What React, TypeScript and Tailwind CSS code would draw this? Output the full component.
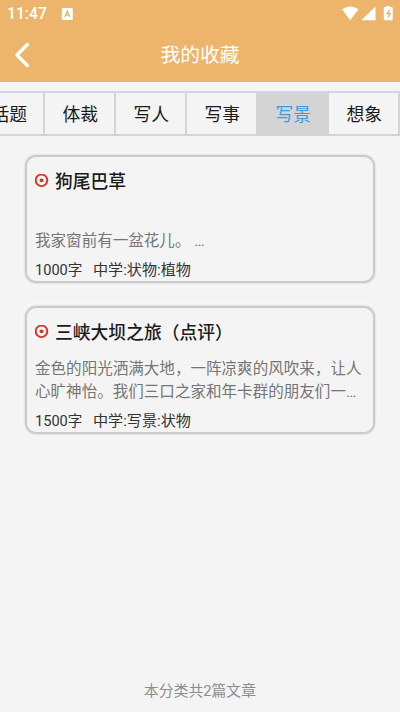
const FONT = 'font-["Roboto","Noto_Sans_CJK_SC",sans-serif]';

const tabs = ['话题', '体裁', '写人', '写事', '写景', '想象'];

const articles = [
  {
    title: '狗尾巴草',
    lines: ['', '我家窗前有一盆花儿。 …'],
    count: '1000字',
    category: '中学:状物:植物',
  },
  {
    title: '三峡大坝之旅（点评）',
    lines: ['金色的阳光洒满大地，一阵凉爽的风吹来，让人', '心旷神怡。我们三口之家和年卡群的朋友们一…'],
    count: '1500字',
    category: '中学:写景:状物',
  },
];

function StatusBar() {
  return (
    <div className="flex h-7 items-center pr-[7px] pl-[7px] text-white">
      <span className="w-[40px] text-[15.7px] leading-7 font-medium">11:47</span>
      <svg className="ml-[14px]" width="12" height="12" viewBox="0 0 12 12">
        <rect x="0.8" width="11" height="12" rx="1.5" fill="white" />
        <path d="M3.800 9 6.300 3 8.800 9M4.800 7.2h3" fill="none" stroke="#e9b56c" strokeWidth="1.3" />
      </svg>
      <svg className="ml-auto" width="52" height="16" viewBox="0 0 52 16">
        <path d="M1 3.3Q9-2.500 17.500 3.3L9.200 14.200Z" fill="white" />
        <path d="M34.500 .6V14.2H20.300Z" fill="white" />
        <path d="M45.500 0h3.500v1h1.700q1 0 1 1V13.200q0 1-1 1h-6.900q-1 0-1-1V2q0-1 1-1h1.700Z" fill="white" />
        <path d="M48.700 3.800 46.100 7.600h3L47.100 11.600" fill="none" stroke="#e0ad68" strokeWidth="1.200" />
      </svg>
    </div>
  );
}

function Card({ title, lines, count, category }: (typeof articles)[number]) {
  return (
    <article className="h-[128px] rounded-[11px] border-2 border-[#cbcbcb] bg-[#f4f4f4] px-[8px] pt-[12px] shadow-[0_0_2px_1px_#e2e2e2,0_0_2px_4px_#f7f7f7]">
      <div className="flex h-6 items-center">
        <svg width="14" height="14" viewBox="0 0 14 14">
          <circle cx="6.5" cy="6.3" r="5.800" fill="none" stroke="#d73427" strokeWidth="1.9" />
          <circle cx="6.5" cy="6.3" r="1.900" fill="#d73427" />
        </svg>
        <h2 className="ml-[6px] pt-[2px] text-[17.8px] leading-6 font-medium whitespace-nowrap text-[#1b1b1b]">{title}</h2>
      </div>
      <div className="mt-[14px] text-[15.560px] leading-[23px] text-[#757575]">
        {lines.map((line, i) => (
          <p key={i} className="h-[23px] whitespace-pre">{line}</p>
        ))}
      </div>
      <p className="mt-[7px] flex text-[#333] leading-5 whitespace-nowrap">
        <span className="w-[58px] text-[14.6px]">{count}</span>
        <span className="text-[15.1px]">{category}</span>
      </p>
    </article>
  );
}

export default function App() {
  return (
    <div className={`flex h-[712px] w-[400px] flex-col overflow-hidden bg-[#f4f4f4] ${FONT}`} lang="zh-CN">
      <header className="h-[82px] shrink-0 bg-[#edb56b]">
        <StatusBar />
        <div className="grid h-[54px] grid-cols-[40px_1fr_40px] items-center text-white">
          <svg className="ml-[14px]" width="16" height="26" viewBox="0 0 16 26">
            <path d="M13.300 2.500 3 13 13.300 23.500" fill="none" stroke="white" strokeWidth="3.400" strokeLinecap="round" strokeLinejoin="round" />
          </svg>
          <h1 className="pt-[2px] text-center text-[19.800px] leading-7">我的收藏</h1>
        </div>
      </header>
      <nav className="mt-[9px] flex h-[45px] w-[427px] shrink-0 -translate-x-[26px] border-t-2 border-b-2 border-t-[#d0d7e2] border-b-[#d4d4d4]">
        {tabs.map((tab) => (
          <div
            key={tab}
            className={`flex w-[71px] shrink-0 items-center justify-center border-r-2 border-[#d4d4d4] pt-[3px] pl-[1.5px] text-[17.8px] ${
              tab === '写景' ? 'bg-[#d4d4d4] text-[#3f9be0]' : 'text-[#1b1b1b]'
            }`}
          >
            {tab}
          </div>
        ))}
      </nav>
      <main className="mt-[19px] flex flex-col gap-[23px] px-[25px]">
        {articles.map((a) => (
          <Card key={a.title} {...a} />
        ))}
      </main>
      <footer className="mt-auto pb-[11px] text-center text-[14.8px] leading-5 text-[#8d8d8d]">本分类共2篇文章</footer>
    </div>
  );
}
